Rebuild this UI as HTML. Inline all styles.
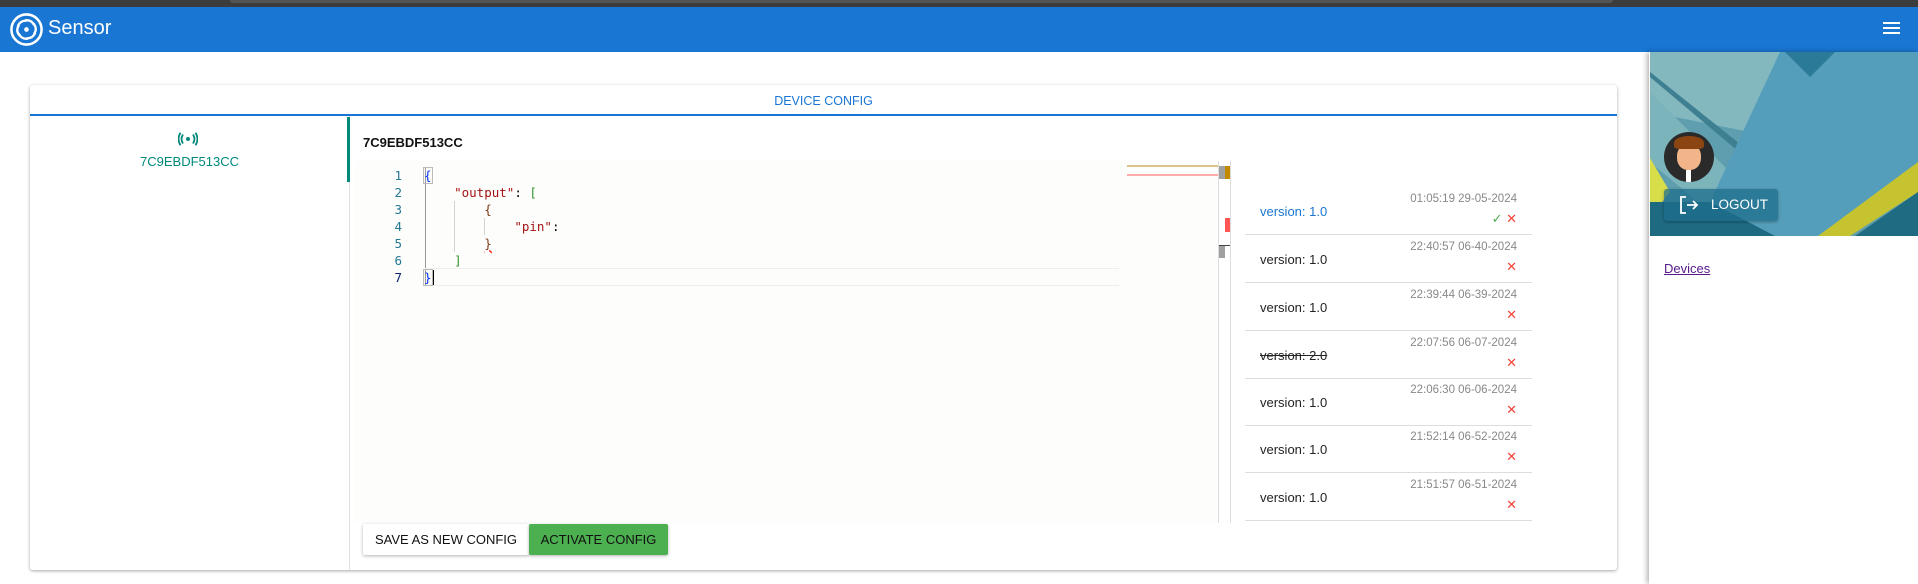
<!DOCTYPE html>
<html><head><meta charset="utf-8"><style>
*{box-sizing:border-box;margin:0;padding:0}
body{width:1918px;height:584px;overflow:hidden;background:#fff;font-family:"Liberation Sans",Arial,sans-serif;position:relative}
.abs{position:absolute}
.top{left:0;top:0;width:1918px;height:7px;background:#3c3c3c}
.top i{position:absolute;left:230px;right:305px;top:0;height:3px;background:#555;border-radius:0 0 4px 4px}
.bar{left:0;top:7px;width:1918px;height:45px;background:#1976d2}
.card{left:30px;top:85px;width:1587px;height:485px;background:#fff;border-radius:3px;box-shadow:0 1px 3px rgba(0,0,0,.35)}
.mono{font-family:"DejaVu Sans Mono","Liberation Mono",monospace;font-size:12.5px}
.row{position:absolute;left:1245px;width:287px;height:48px;border-bottom:1px solid #ddd}
.row .v{position:absolute;left:15px;top:17px;font-size:13px;color:#222}
.row .t{position:absolute;right:15px;top:6px;font-size:11.5px;color:#888}
.row .x{position:absolute;right:15px;top:24px;font-size:13px;color:#f44336}
</style></head><body>
<div class="abs top"><i></i></div>
<div class="abs bar">
<svg class="abs" style="left:9px;top:5px" width="35" height="35" viewBox="0 0 36 36"><circle cx="18" cy="18" r="15.5" fill="none" stroke="#fff" stroke-width="2.6"/>
<circle cx="18" cy="18" r="2.4" fill="#fff"/>
<g fill="none" stroke="#fff" stroke-width="2.4" stroke-linecap="round">
<path d="M17 8.5 Q23 8 25.5 13"/>
<path d="M17 8.5 Q23 8 25.5 13" transform="rotate(60 18 18)"/>
<path d="M17 8.5 Q23 8 25.5 13" transform="rotate(120 18 18)"/>
<path d="M17 8.5 Q23 8 25.5 13" transform="rotate(180 18 18)"/>
<path d="M17 8.5 Q23 8 25.5 13" transform="rotate(240 18 18)"/>
<path d="M17 8.5 Q23 8 25.5 13" transform="rotate(300 18 18)"/>
</g></svg>
<div class="abs" style="left:48px;top:10px;color:#fff;font-size:20px">Sensor</div>
<div class="abs" style="left:1883px;top:15px;width:17px;height:2px;background:#fff;box-shadow:0 5px 0 #fff,0 10px 0 #fff"></div>
</div>

<div class="abs card">
<div class="abs" style="left:0;right:0;top:9px;text-align:center;color:#1976d2;font-size:12.5px">DEVICE CONFIG</div>
<div class="abs" style="left:0;right:0;top:29px;height:2px;background:#1976d2"></div>
<div class="abs" style="left:319px;top:31px;width:1px;height:454px;background:#e0e0e0"></div>
<div class="abs" style="left:317px;top:32px;width:3px;height:65px;background:#00897b"></div>
<svg class="abs" style="left:148px;top:47px" width="20" height="14" viewBox="0 0 20 14"><g fill="none" stroke="#00897b" stroke-width="1.8"><path d="M5 2.5 Q2 7 5 11.5M15 2.5 Q18 7 15 11.5M2.5 0.8 Q-1.5 7 2.5 13.2M17.5 0.8 Q21.5 7 17.5 13.2"/></g><circle cx="10" cy="7" r="2" fill="#00897b"/></svg>
<div class="abs" style="left:0;width:319px;top:69px;text-align:center;color:#00897b;font-size:13px">7C9EBDF513CC</div>
<div class="abs" style="left:333px;top:50px;font-size:13px;font-weight:bold;color:#111">7C9EBDF513CC</div>
</div>

<!-- editor -->
<div class="abs" style="left:355px;top:161px;width:862px;height:362px;background:#fdfdfb"></div>
<div class="abs mono" style="left:380px;top:167px;width:22px;text-align:right;line-height:17px;color:#237893">1<br>2<br>3<br>4<br>5<br>6<br><span style="color:#0b216f">7</span></div>
<div class="abs" style="left:425px;top:167px;width:1px;height:119px;background:#999"></div>
<div class="abs" style="left:454px;top:201px;width:1px;height:51px;background:#d3d3d3"></div>
<div class="abs" style="left:484px;top:218px;width:1px;height:17px;background:#d3d3d3"></div>
<div class="abs" style="left:425px;top:268px;width:694px;height:18px;border-top:1px solid #eee;border-bottom:1px solid #eee"></div>
<div class="abs mono" style="left:424px;top:167px;line-height:17px;white-space:pre;color:#000"><span style="color:#0431fa;outline:1px solid #bbb">{</span>
    <span style="color:#a31515">"output"</span>: <span style="color:#319331">[</span>
        <span style="color:#7b3814">{</span>
            <span style="color:#a31515">"pin"</span>:
        <span style="color:#7b3814;text-decoration:underline wavy red">}</span>
    <span style="color:#319331">]</span>
<span style="color:#0431fa;outline:1px solid #bbb">}</span><span style="border-left:2px solid #000"></span></div>
<div class="abs" style="left:1127px;top:165px;width:92px;height:2px;background:#dcc388"></div>
<div class="abs" style="left:1127px;top:174px;width:92px;height:2px;background:#ffaaaa"></div>
<div class="abs" style="left:1218px;top:161px;width:1px;height:362px;background:#ddd"></div>
<div class="abs" style="left:1230px;top:161px;width:1px;height:362px;background:#ddd"></div>
<div class="abs" style="left:1219px;top:166px;width:6px;height:13px;background:#a0a0a0"></div>
<div class="abs" style="left:1225px;top:166px;width:5px;height:13px;background:#c38a00"></div>
<div class="abs" style="left:1225px;top:218px;width:5px;height:14px;background:#ff5555"></div>
<div class="abs" style="left:1219px;top:245px;width:11px;height:1px;background:#444"></div>
<div class="abs" style="left:1219px;top:246px;width:6px;height:12px;background:#a0a0a0"></div>

<!-- versions -->
<div class="row" style="top:187px"><span class="v" style="color:#1976d2">version: 1.0</span><span class="t">01:05:19 29-05-2024</span><span class="x"><span style="color:#4caf50">✓</span> ✕</span></div>
<div class="row" style="top:235px"><span class="v">version: 1.0</span><span class="t">22:40:57 06-40-2024</span><span class="x">✕</span></div>
<div class="row" style="top:283px"><span class="v">version: 1.0</span><span class="t">22:39:44 06-39-2024</span><span class="x">✕</span></div>
<div class="row" style="top:331px"><span class="v" style="text-decoration:line-through">version: 2.0</span><span class="t">22:07:56 06-07-2024</span><span class="x">✕</span></div>
<div class="row" style="top:378px"><span class="v">version: 1.0</span><span class="t">22:06:30 06-06-2024</span><span class="x">✕</span></div>
<div class="row" style="top:425px"><span class="v">version: 1.0</span><span class="t">21:52:14 06-52-2024</span><span class="x">✕</span></div>
<div class="row" style="top:473px"><span class="v">version: 1.0</span><span class="t">21:51:57 06-51-2024</span><span class="x">✕</span></div>

<!-- buttons -->
<div class="abs" style="left:363px;top:524px;width:166px;height:31px;background:#fff;box-shadow:0 1px 3px rgba(0,0,0,.3);border-radius:2px;font-size:13px;text-align:center;line-height:31px;color:#111">SAVE AS NEW CONFIG</div>
<div class="abs" style="left:529px;top:524px;width:139px;height:31px;background:#4caf50;box-shadow:0 1px 3px rgba(0,0,0,.3);border-radius:2px;font-size:13px;text-align:center;line-height:31px;color:#111">ACTIVATE CONFIG</div>

<!-- drawer -->
<div class="abs" style="left:1649px;top:52px;width:269px;height:532px;background:#fff;box-shadow:-2px 0 5px rgba(0,0,0,.3)"></div>
<svg class="abs" style="left:1650px;top:52px" width="268" height="184" viewBox="0 0 268 184">
<rect width="268" height="184" fill="#5f9eae"/>
<polygon points="0,0 160,0 100,80 0,60" fill="#84b8bf"/>
<polygon points="0,40 90,130 60,160 0,110" fill="#7cb4bb"/>
<polygon points="0,20 100,100 95,105 0,25" fill="#3e7f92"/>
<polygon points="130,0 268,0 268,130 170,184 60,184 60,150" fill="#559ebb"/>
<polygon points="135,0 185,0 160,25" fill="#2a7a98"/>
<polygon points="0,106 20,140 0,165" fill="#d8dd4a"/>
<polygon points="268,110 268,140 200,184 168,184" fill="#c5c430"/>
<polygon points="268,140 268,184 205,184" fill="#1f6b82"/>
<polygon points="0,150 60,150 125,184 0,184" fill="#1e6a80"/>
</svg>
<div class="abs" style="left:1664px;top:132px;width:50px;height:50px;border-radius:50%;background:#2a2a2a;overflow:hidden">
<div class="abs" style="left:13px;top:12px;width:24px;height:26px;border-radius:45%;background:#f2b58a"></div>
<div class="abs" style="left:10px;top:4px;width:30px;height:13px;border-radius:50% 50% 20% 20%;background:#8b4513"></div>
<div class="abs" style="left:22px;top:38px;width:5px;height:12px;background:#fff"></div></div>
<div class="abs" style="left:1664px;top:189px;width:114px;height:32px;background:rgba(30,110,140,.75);border-radius:3px;box-shadow:0 1px 3px rgba(0,0,0,.3)">
<svg class="abs" style="left:15px;top:7px" width="20" height="18" viewBox="0 0 20 18"><path d="M7 1H2V17H7M8 9H18M14 5L18 9L14 13" fill="none" stroke="#fff" stroke-width="1.8"/></svg>
<span class="abs" style="left:47px;top:8px;color:#fff;font-size:13.5px">LOGOUT</span></div>
<a class="abs" style="left:1664px;top:261px;color:#551a8b;font-size:13px;text-decoration:underline">Devices</a>
</body></html>
